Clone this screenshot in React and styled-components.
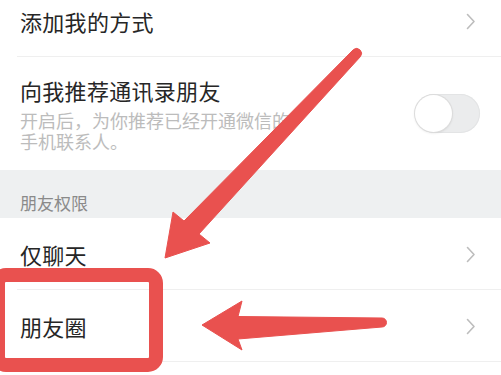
import React from "react";
import styled, { createGlobalStyle } from "styled-components";

const Global = createGlobalStyle`
  html, body { margin: 0; padding: 0; background: #ffffff; }
  body { font-family: "Noto Sans CJK SC", "Noto Sans", sans-serif; }
  * { box-sizing: border-box; }
`;

const Page = styled.div`
  position: relative;
  width: 501px;
  height: 375px;
  overflow: hidden;
  background: #ffffff;
`;

const List = styled.div`
  display: flex;
  flex-direction: column;
  margin-top: -15px;
`;

const Row = styled.div`
  position: relative;
  display: flex;
  align-items: center;
  justify-content: space-between;
  height: ${(p) => p.$h || 72}px;
  padding: 0 25px 0 20px;
  ${(p) =>
    p.$divider
      ? `&::after {
    content: "";
    position: absolute;
    left: 17px;
    right: 0;
    bottom: 0;
    height: 1px;
    background: #efefef;
  }`
      : ""}
`;

const Title = styled.span`
  font-size: 22px;
  line-height: 30px;
  color: #262626;
  letter-spacing: 0.3px;
`;

const TextCol = styled.div`
  display: flex;
  flex-direction: column;
  align-self: flex-start;
  padding-top: 18px;
`;

const Sub = styled.div`
  width: 278px;
  margin-top: 5px;
  font-size: 18px;
  line-height: 21px;
  color: #bcbcbc;
`;

const Toggle = styled.div`
  position: relative;
  width: 65px;
  height: 39px;
  margin-right: -4px;
  border-radius: 20px;
  background: #ebeced;
  box-shadow: inset 0 0 0 1px #e3e4e5;
`;

const Knob = styled.div`
  position: absolute;
  left: 0;
  top: 1px;
  width: 37px;
  height: 37px;
  border-radius: 50%;
  background: #ffffff;
  box-shadow: 0 0 0 1px #dcdcdc, 0 1px 3px rgba(0, 0, 0, 0.12);
`;

const Section = styled.div`
  height: 48px;
  padding: 22px 20px 0;
  background: #eef0f1;
  font-size: 17px;
  line-height: 22px;
  color: #8a8a8a;
`;

const Overlay = styled.svg`
  position: absolute;
  left: 0;
  top: 0;
  pointer-events: none;
`;

const Chevron = () => (
  <svg width="10" height="17" viewBox="0 0 10 17">
    <polyline
      points="1.5,1.5 8,8.5 1.5,15.5"
      fill="none"
      stroke="#bdbdbd"
      strokeWidth="1.6"
      strokeLinejoin="round"
      strokeLinecap="round"
    />
  </svg>
);

export default function App() {
  const red = "#e9514f";
  return (
    <>
      <Global />
      <Page>
        <List>
          <Row $divider>
            <Title>添加我的方式</Title>
            <Chevron />
          </Row>
          <Row $h={113}>
            <TextCol>
              <Title>向我推荐通讯录朋友</Title>
              <Sub>开启后，为你推荐已经开通微信的手机联系人。</Sub>
            </TextCol>
            <Toggle>
              <Knob />
            </Toggle>
          </Row>
          <Section>朋友权限</Section>
          <Row $divider>
            <Title>仅聊天</Title>
            <Chevron />
          </Row>
          <Row $divider>
            <Title>朋友圈</Title>
            <Chevron />
          </Row>
        </List>
        <Overlay width="501" height="375" viewBox="0 0 501 375">
          <rect
            x="-2"
            y="275"
            width="158"
            height="90"
            rx="8"
            fill="none"
            stroke={red}
            strokeWidth="14"
          />
          <path
            d="M165 258 L173 212 L184 221 L353.5 49.5 A5 5 0 0 1 360.5 56.5 L199 234 L210 243 Z"
            fill={red}
            stroke={red}
            strokeWidth="1"
            strokeLinejoin="round"
          />
          <path
            d="M202 325 L242 301 L238 316.5 L382 318 A4.5 4.5 0 0 1 382 327 L238 339 L242 350 Z"
            fill={red}
            stroke={red}
            strokeWidth="1"
            strokeLinejoin="round"
          />
        </Overlay>
      </Page>
    </>
  );
}
